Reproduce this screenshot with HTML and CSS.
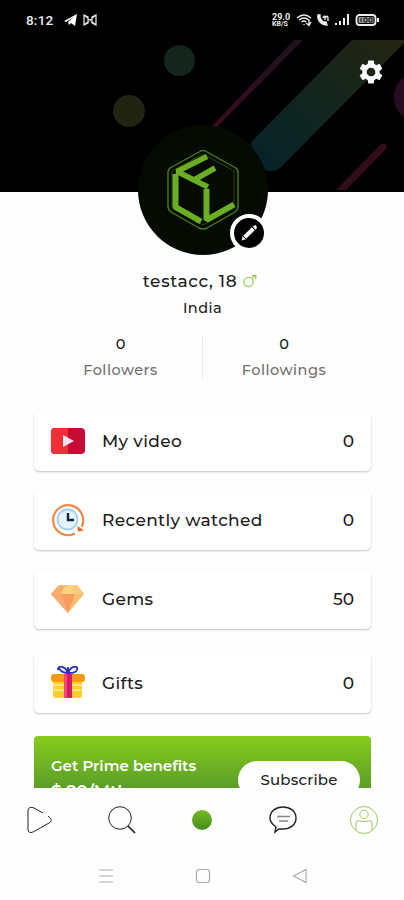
FILE: index.html
```html
<!DOCTYPE html>
<html lang="en">
<head>
    <meta charset="UTF-8">
    <meta name="viewport" content="width=device-width, initial-scale=1.0">
    <title>Profile</title>
    <link rel="stylesheet" href="styles.css">
</head>
<body>
    <header class="cover">
        <svg class="cover-art" viewBox="0 0 404 192">
            <defs>
                <linearGradient id="band" x1="0" y1="1" x2="1" y2="0">
                    <stop offset="0" stop-color="#06222b"/>
                    <stop offset=".45" stop-color="#10251e"/>
                    <stop offset="1" stop-color="#262512"/>
                </linearGradient>
                <linearGradient id="line" x1="0" y1="1" x2="1" y2="0">
                    <stop offset="0" stop-color="#3a0b20"/>
                    <stop offset="1" stop-color="#1b141c"/>
                </linearGradient>
            </defs>
            <circle cx="179.500" cy="60.500" r="15.500" fill="#14251e"/>
            <circle cx="129" cy="111" r="16" fill="#212411"/>
            <circle cx="420" cy="97" r="26" fill="#260d20"/>
            <path d="M352 40H404V43L281 167Q278 171 270 171Q264 172 261 165L252 149Q249 143 255 138Z" fill="url(#band)"/>
            <path d="M294 40H303L217 127L211 127Z" fill="url(#line)"/>
            <path d="M336 190L381 144Q387 143 387 148L346 190Z" fill="#330c1c"/>
        </svg>
        <div class="status">
            <span class="time">8:12</span>
            <svg class="status-left" width="36" height="14" viewBox="0 0 36 14">
                <path d="M1 8L14 1L12 13L8 10L6 12L5 9L11 4L3 9Z" fill="#fff"/>
                <path d="M21 2V12L25 10V4ZM33 2V12L29 10V4ZM21 2L33 12M33 2L21 12" fill="none" stroke="#ddd" stroke-width="1.300"/>
            </svg>
            <div class="status-right">
                <span class="speed"><b>29.0</b><b class="unit">KB/S</b></span>
                <svg width="84" height="14" viewBox="0 0 84 14" fill="none" stroke="#eee" stroke-width="1.400">
                    <path d="M1 5Q8-1 15 5M3 7Q8 3 13 7M5.500 9Q8 7 10 9M8 11V12M13 7V12M10 10L13 12.500L15 9"/>
                    <path d="M22 2Q21 5 24 9Q27 12 31 12L30 9L27 9L24 5L24 2Z" fill="#eee"/>
                    <path d="M27 5Q28 2 30 4Q32 2 32 6V8M29 7V4"/>
                    <path d="M40 10V12M44 8V12M48 5V12M52 1V12" stroke-width="2"/>
                    <rect x="60.500" y="2" width="19" height="10" rx="3" stroke-width="1.800"/>
                    <path d="M82 5V9" stroke-width="2"/>
                    <rect x="62.500" y="4" width="15" height="6" rx="1" fill="#999" stroke="none"/>
                    <path d="M65 5V9M68 5H71V9H68ZM73 5H76V9H73Z" stroke="#111" stroke-width="1"/>
                </svg>
            </div>
        </div>
        <svg class="settings" viewBox="2 2 20 20">
            <path fill="#fff" d="M19.140 12.940c.04-.3.06-.61.06-.94s-.02-.64-.07-.94l2.030-1.580a.49.49 0 0 0 .12-.61l-1.920-3.320a.49.49 0 0 0-.59-.22l-2.390.96a7 7 0 0 0-1.620-.94l-.36-2.540a.48.48 0 0 0-.48-.41h-3.840c-.24 0-.43.17-.47.41l-.36 2.540c-.59.24-1.130.57-1.620.94l-2.390-.96a.48.48 0 0 0-.59.22L2.740 8.870a.47.47 0 0 0 .12.61l2.030 1.580c-.05.3-.09.63-.09.94s.02.64.07.94l-2.030 1.580a.49.49 0 0 0-.12.61l1.920 3.320c.12.22.37.29.59.22l2.390-.96c.5.38 1.030.7 1.620.94l.36 2.540c.05.24.24.41.48.41h3.840c.24 0 .44-.17.47-.41l.36-2.540c.59-.24 1.130-.56 1.620-.94l2.390.96c.22.08.47 0 .59-.22l1.920-3.320a.47.47 0 0 0-.12-.61zM12 15.600a3.600 3.600 0 1 1 0-7.200 3.600 3.600 0 0 1 0 7.200z"/>
        </svg>
    </header>

    <main class="profile">
        <div class="avatar">
            <svg class="logo" viewBox="0 0 74 82">
                <path d="M37 1.500Q39 1.500 41 3L69 18.500Q72 20 72 24V57Q72 61 69 63L41 79Q37 81 33 79L5 63Q2 61 2 57V24Q2 20 5 18.500L33 3Q35 1.500 37 1.500Z" fill="none" stroke="#477d19" stroke-width="1.400"/>
                <path d="M37 5L68 22V59L37 76L6 59V22Z" fill="none" stroke="#244712" stroke-width="1"/>
                <g fill="none" stroke="#69ae23" stroke-width="6" stroke-linejoin="bevel">
                    <path d="M41 7.500L11 22.500L42 38M28 31L49 19" stroke-width="5.500"/>
                    <path d="M9.500 25V58L35 72.500"/>
                    <path d="M40.500 40V71L68 55.500"/>
                </g>
            </svg>
            <span class="edit">
                <svg width="18" height="18" viewBox="0 0 18 18">
                    <path d="M4 14L14 4" stroke="#fff" stroke-width="4"/>
                    <path d="M1.500 16.500L3 11.500L6.500 15ZM13 2L16 1L17 4L15.500 5.500Z" fill="#fff"/>
                    <path d="M2.500 11.500L6.500 15.500M11.500 2.500L15.500 6.500" stroke="#000" stroke-width="1"/>
                </svg>
            </span>
        </div>
        <h1 class="name"><span>testacc, 18</span>
            <svg width="14" height="14" viewBox="0 0 14 14" fill="none" stroke="#a0cb68" stroke-width="1.300"><circle cx="5.500" cy="8" r="4.700"/><path d="M9 4.500L12.500 1.500M9 1.500H12.800V5"/></svg>
        </h1>
        <p class="country">India</p>
        <div class="stats">
            <div class="stat"><b>0</b><span>Followers</span></div>
            <div class="stat"><b>0</b><span>Followings</span></div>
        </div>

        <div class="list">
            <div class="card">
                <svg class="card-icon" viewBox="0 0 34 34">
                    <rect y="4" width="34" height="26" rx="4" fill="#c70b34"/>
                    <path d="M17 4H4Q0 4 0 8V26Q0 30 4 30H17Z" fill="#f22e37"/>
                    <path d="M12 11L23 17L12 23Z" fill="#f4e5f0"/>
                </svg>
                <span class="label">My video</span><span class="value">0</span>
            </div>
            <div class="card">
                <svg class="card-icon" viewBox="0 0 34 34" fill="none">
                    <path d="M24 30.500A15 15 0 1 1 30.500 24" stroke="#ee8a45" stroke-width="2.200"/>
                    <path d="M26.500 23L33 27.500L27 28.500Z" fill="#ec6524"/>
                    <circle cx="16.500" cy="16.500" r="10" fill="#e4f4ff" stroke="#a5cff7" stroke-width="1.800"/>
                    <path d="M17 10V17H23" stroke="#12233f" stroke-width="2.400"/>
                </svg>
                <span class="label">Recently watched</span><span class="value">0</span>
            </div>
            <div class="card">
                <svg class="card-icon" viewBox="0 0 34 34">
                    <path d="M8 3H26L33 12L17 31L0 12Z" fill="#f9bd70"/>
                    <path d="M0 12L8 3L13 6L10 12Z" fill="#fbae69"/>
                    <path d="M13 6L17 3H26L24 12H10Z" fill="#ffd180"/>
                    <path d="M26 3L33 12H24L20 6Z" fill="#f8cb78"/>
                    <path d="M0 12H24L17 31Z" fill="#f99c5d"/>
                    <path d="M0 12H10L17 31Z" fill="#fbac76"/>
                </svg>
                <span class="label">Gems</span><span class="value">50</span>
            </div>
            <div class="card gifts">
                <svg class="card-icon" viewBox="0 0 34 34">
                    <path d="M17 8C15-1 6-1 7 4M17 8C19-1 28-1 26 4Q25 7 18 7M8 2Q9 6 16 7M17 1V8" fill="none" stroke="#2933bc" stroke-width="1.800"/>
                    <path d="M2 12H31V30Q31 32 29 32H5Q2 32 2 29Z" fill="#ffcf29"/>
                    <path d="M2 19H31M2 24H31" stroke="#ffe57b" stroke-width="2"/>
                    <rect y="8" width="34" height="8" rx="3" fill="#f79a0c"/>
                    <rect x="13" y="8" width="8" height="24" fill="#d71b65"/>
                    <rect x="13" y="8" width="3" height="24" fill="#f54778"/>
                </svg>
                <span class="label">Gifts</span><span class="value">0</span>
            </div>
            <div class="prime">
                <div class="prime-text">
                    <span>Get Prime benefits</span>
                    <b>$ 20/Mth</b>
                </div>
                <button class="subscribe">Subscribe</button>
            </div>
        </div>
    </main>

    <nav class="tabs">
        <svg viewBox="0 0 30 30" stroke="#222"><path d="M18 8L9 3Q4 1 3 5V24Q3 29 8 27L24 18Q28 16 25 13L23 11"/></svg>
        <svg viewBox="0 0 30 30" stroke="#222"><circle cx="14" cy="13" r="11.300"/><path d="M22 21L29 28" stroke-width="1.700"/></svg>
        <span class="live"></span>
        <svg viewBox="0 0 30 30" stroke="#222"><path d="M7 27L8 22Q2 18 2 13C2 6 8 2 15 2S28 6 28 13S22 24 15 24Q12 24 11 24Z" stroke-width="1.400"/><path d="M9 11.500H22M11 16H20" stroke="#888" stroke-width="1.500"/></svg>
        <svg viewBox="0 0 30 30" stroke="#9fc568"><circle cx="15" cy="15" r="13.500"/><circle cx="15" cy="9.500" r="4.200"/><path d="M7 25V18Q7 15 10 16Q15 17 20 16Q23 15 23 18V25"/></svg>
    </nav>
    <footer class="system">
        <svg viewBox="0 0 16 16"><path d="M1 2H15M1 8H15M1 14H15"/></svg>
        <svg viewBox="0 0 16 16"><rect x="1.500" y="1.500" width="13" height="13" rx="2.500"/></svg>
        <svg viewBox="0 0 16 16"><path d="M14 1.500V14.500L1.500 8Z"/></svg>
    </footer>
</body>
</html>
```
FILE: styles.css
```css
* {
    box-sizing: border-box;
}
body {
    margin: 0;
    height: 900px;
    display: flex;
    flex-direction: column;
    overflow: hidden;
    background: #fefefe;
    color: #1c1c1c;
    font-family: 'Montserrat', 'Inter', sans-serif;
}
.cover {
    position: relative;
    flex: none;
    height: 192px;
    background: #000;
}
.cover-art {
    position: absolute;
    top: 0;
    left: 0;
    width: 404px;
    height: 192px;
}
.status {
    position: relative;
    display: flex;
    align-items: center;
    height: 40px;
    padding: 0 24px 0 26px;
    color: #eee;
}
.time {
    width: 37px;
    font-family: Roboto, sans-serif;
    font-size: 13.5px;
    font-weight: 500;
    letter-spacing: 0.2px;
}
.status-right {
    display: flex;
    align-items: center;
    gap: 5px;
    margin-left: auto;
}
.speed {
    display: flex;
    flex-direction: column;
    width: 19px;
    font-family: Roboto, sans-serif;
    font-size: 9px;
    line-height: 8px;
}
.unit {
    font-size: 7px;
    line-height: 7px;
}
.settings {
    position: absolute;
    top: 60px;
    right: 21px;
    width: 24px;
    height: 24px;
}
.profile {
    flex: 1;
    min-height: 0;
    display: flex;
    flex-direction: column;
    align-items: center;
    position: relative;
    padding-left: 1px;
}
.avatar {
    position: relative;
    display: flex;
    align-items: center;
    justify-content: center;
    flex: none;
    width: 130px;
    height: 130px;
    margin-top: -67px;
    border-radius: 50%;
    background: #050b03;
}
.logo {
    width: 74px;
    height: 82px;
}
.edit {
    position: absolute;
    right: 0;
    bottom: 3px;
    display: flex;
    align-items: center;
    justify-content: center;
    width: 38px;
    height: 38px;
    border: 4px solid #fff;
    border-radius: 50%;
    background: #000;
}
.name {
    display: flex;
    align-items: center;
    gap: 6px;
    height: 26px;
    margin: 13px 0 0 -5px;
    font-size: 17px;
    font-weight: 500;
    letter-spacing: 0.6px;
}
.country {
    margin: 4px 0 0;
    font-size: 14.5px;
    font-weight: 500;
    line-height: 20px;
    letter-spacing: 0.45px;
}
.stats {
    display: flex;
    height: 41px;
    margin: 19px 0 0 -1px;
}
.stat {
    display: flex;
    flex-direction: column;
    align-items: center;
    width: 163px;
    font-size: 14.5px;
    font-weight: 500;
    line-height: 15px;
}
.stat + .stat {
    border-left: 1px solid #e6e6e6;
}
.stat b {
    font-weight: 500;
}
.stat span {
    margin-top: 11px;
    color: #707070;
    letter-spacing: 0.5px;
}
.list {
    flex: 1;
    min-height: 0;
    width: 337px;
    margin-top: 34px;
    display: flex;
    flex-direction: column;
    gap: 20px;
}
.card {
    display: flex;
    align-items: center;
    flex: none;
    height: 59px;
    padding: 0 17px;
    border-radius: 5px;
    background: #fff;
    box-shadow: 0 1px 2px rgba(0, 0, 0, 0.24);
    font-size: 17px;
    font-weight: 500;
}
.gifts {
    margin-top: 5px;
}
.card-icon {
    width: 34px;
    height: 34px;
    margin-bottom: 1px;
}
.label {
    margin-left: 17px;
    padding-bottom: 2px;
    letter-spacing: 0.35px;
}
.value {
    margin-left: auto;
    padding-bottom: 2px;
}
.prime {
    display: flex;
    flex: none;
    align-items: flex-start;
    justify-content: space-between;
    height: 100px;
    margin-top: 3px;
    padding: 0 11px 0 17px;
    border-radius: 4px;
    background: linear-gradient(#87cc1e, #5b9e27 52px);
    color: #fff;
}
.prime-text {
    display: flex;
    flex-direction: column;
    padding-top: 20px;
    font-size: 15px;
    font-weight: 600;
    line-height: 20px;
}
.prime-text b {
    margin-top: 5px;
    font-size: 17px;
    font-weight: 600;
}
.subscribe {
    width: 122px;
    height: 38px;
    margin-top: 25px;
    padding-bottom: 2px;
    border: 0;
    border-radius: 19px;
    background: #fff;
    color: #222;
    font: inherit;
    font-size: 15px;
    font-weight: 500;
    letter-spacing: 0.2px;
}
.tabs {
    position: relative;
    display: grid;
    grid-template-columns: repeat(5, 81px);
    align-items: center;
    justify-items: center;
    justify-content: center;
    flex: none;
    height: 64px;
    padding-bottom: 1px;
    background: #fefefe;
}
.tabs svg {
    width: 30px;
    height: 30px;
    fill: none;
}
.live {
    width: 20px;
    height: 20px;
    border-radius: 50%;
    background: linear-gradient(#76bb20, #438c20);
}
.system {
    position: relative;
    display: flex;
    align-items: center;
    justify-content: center;
    gap: 81px;
    flex: none;
    height: 48px;
    padding-left: 1px;
    background: #fefefe;
}
.system svg {
    width: 16px;
    height: 16px;
    fill: none;
    stroke: #aaa;
    stroke-width: 1.2;
}
```
